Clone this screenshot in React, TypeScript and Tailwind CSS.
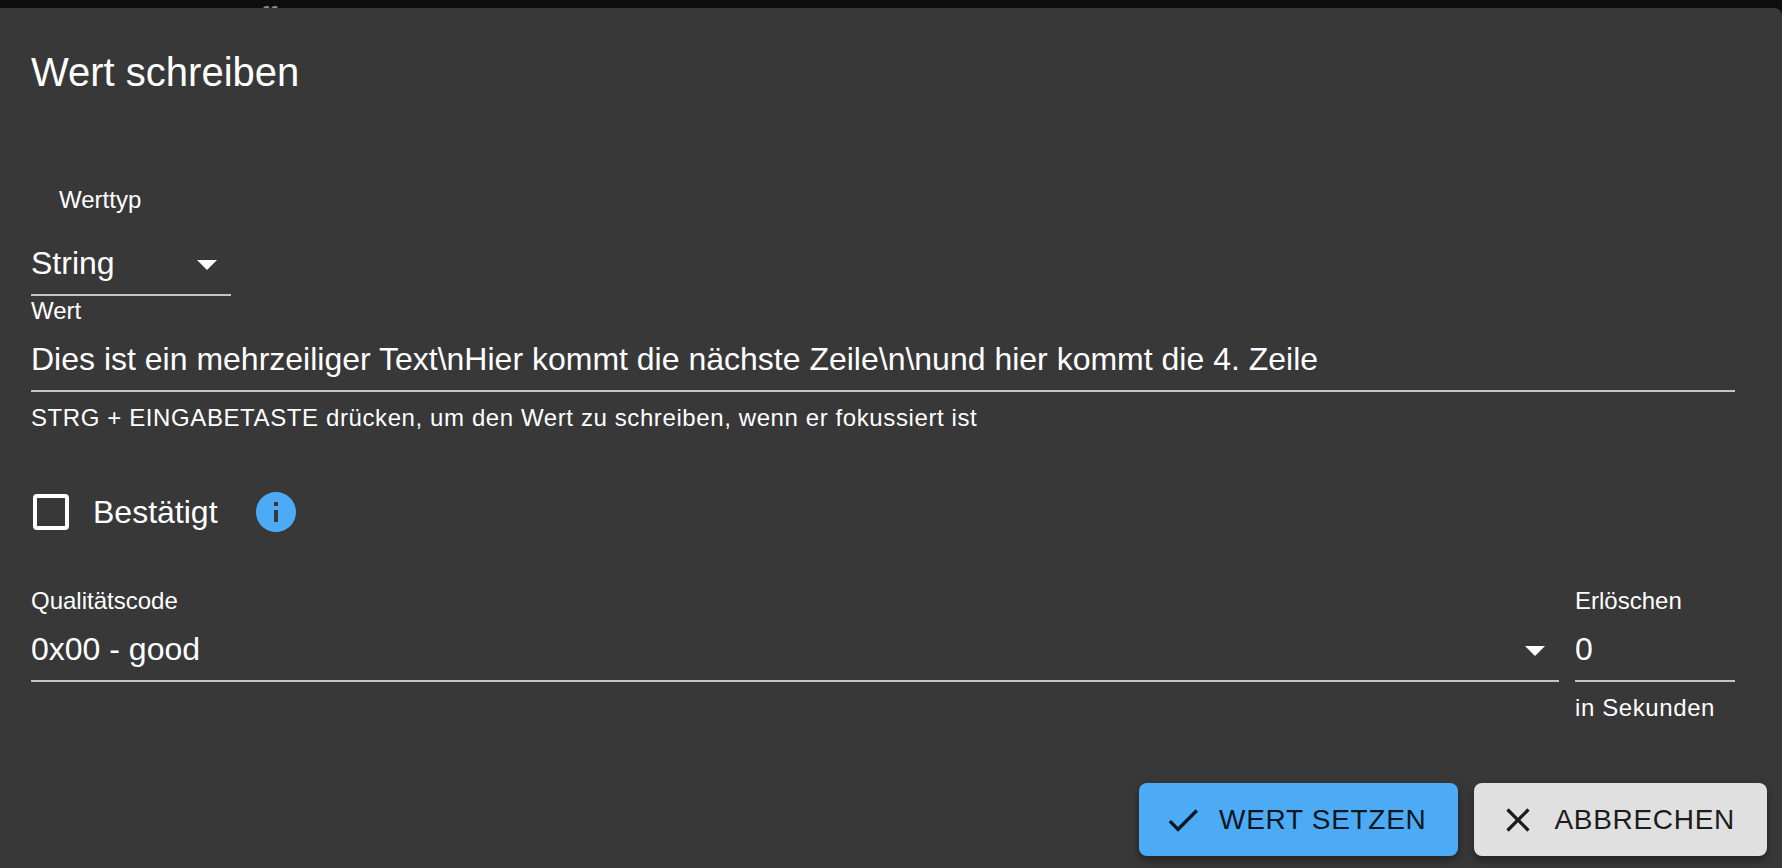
import { useState } from 'react';

const FIELD = 'block h-16 w-full border-b-2 border-[#c4c4c4] bg-transparent text-[32px] text-white focus:outline-none';
const LABEL = 'block text-2xl leading-[30px]';
const HELPER = 'mt-3 text-2xl leading-7 tracking-wide';
const BUTTON = 'flex items-center gap-4 rounded-lg py-3 pr-8 pl-6 text-[28px] leading-[49px] tracking-wide uppercase shadow-[0_4px_8px_rgba(0,0,0,0.4)]';

function Arrow() {
  return (
    <svg viewBox="0 0 24 24" className="pointer-events-none absolute top-2 right-0 size-12 fill-white">
      <path d="M7 10l5 5 5-5z" />
    </svg>
  );
}

export default function App() {
  const [type, setType] = useState('string');
  const [value, setValue] = useState('Dies ist ein mehrzeiliger Text\\nHier kommt die nächste Zeile\\n\\nund hier kommt die 4. Zeile');
  const [ack, setAck] = useState(false);
  const [quality, setQuality] = useState('0');
  const [expire, setExpire] = useState('0');

  return (
    <div className="flex min-h-screen flex-col bg-[#0e0e0e] font-['Liberation_Sans',Arial,sans-serif] text-white">
      {/* page behind the dialog */}
      <div className="h-2 overflow-hidden pt-0.5 pl-[260px] text-[32px] leading-8 text-[#8a8a8a]">ff</div>

      <div role="dialog" aria-labelledby="title" className="flex grow flex-col rounded-tr-lg bg-[#383838]">
        <h2 id="title" className="px-[31px] pt-8 text-[40px] leading-16">Wert schreiben</h2>

        <form id="write" onSubmit={(e) => e.preventDefault()} className="pt-20 pr-[47px] pl-[31px]">
          <label htmlFor="type" className="ml-7 block text-2xl leading-8">Werttyp</label>
          <div className="relative mt-4 w-[200px]">
            <select id="type" value={type} onChange={(e) => setType(e.target.value)} className={`${FIELD} appearance-none`}>
              <option value="string">String</option>
              <option value="number">Number</option>
              <option value="boolean">Boolean</option>
            </select>
            <Arrow />
          </div>

          <label htmlFor="value" className={LABEL}>Wert</label>
          <input id="value" value={value} onChange={(e) => setValue(e.target.value)} className={`${FIELD} mt-0.5`} />
          <p className={HELPER}>STRG + EINGABETASTE drücken, um den Wert zu schreiben, wenn er fokussiert ist</p>

          <div className="mt-14 flex h-12 items-center">
            <label className="flex items-center gap-6 pl-0.5 text-[32px]">
              <input type="checkbox" checked={ack} onChange={(e) => setAck(e.target.checked)}
                className="size-9 appearance-none rounded-[4px] border-4 border-white checked:bg-[#4dabf5]" />
              Bestätigt
            </label>
            <svg viewBox="0 0 24 24" className="ml-[34px] size-12 fill-[#4dabf5]">
              <path d="M12 2C6.48 2 2 6.48 2 12s4.48 10 10 10 10-4.48 10-10S17.52 2 12 2zm1 15h-2v-6h2v6zm0-8h-2V7h2v2z" />
            </svg>
          </div>

          <div className="mt-[50px] flex gap-4">
            <div className="grow">
              <label htmlFor="quality" className={LABEL}>Qualitätscode</label>
              <div className="relative mt-0.5">
                <select id="quality" value={quality} onChange={(e) => setQuality(e.target.value)} className={`${FIELD} appearance-none`}>
                  <option value="0">0x00 - good</option>
                  <option value="1">0x01 - general problem</option>
                </select>
                <Arrow />
              </div>
            </div>
            <div className="w-40">
              <label htmlFor="expire" className={LABEL}>Erlöschen</label>
              <input id="expire" inputMode="numeric" value={expire} onChange={(e) => setExpire(e.target.value)} className={`${FIELD} mt-0.5`} />
              <p className={HELPER}>in Sekunden</p>
            </div>
          </div>
        </form>

        <div className="mt-auto flex justify-end gap-4 pr-[15px] pb-3">
          <button type="submit" form="write" className={`${BUTTON} bg-[#4dabf5] text-[#0a1722]`}>
            <svg viewBox="0 0 24 24" className="size-10 fill-current">
              <path d="M9 16.17 4.83 12l-1.42 1.41L9 19 21 7l-1.41-1.41z" />
            </svg>
            Wert setzen
          </button>
          <button type="button" className={`${BUTTON} bg-[#e0e0e0] text-[#1c1c1c]`}>
            <svg viewBox="0 0 24 24" className="size-10 fill-current">
              <path d="M19 6.41 17.59 5 12 10.59 6.41 5 5 6.41 10.59 12 5 17.59 6.41 19 12 13.41 17.59 19 19 17.59 13.41 12z" />
            </svg>
            Abbrechen
          </button>
        </div>
      </div>
    </div>
  );
}
